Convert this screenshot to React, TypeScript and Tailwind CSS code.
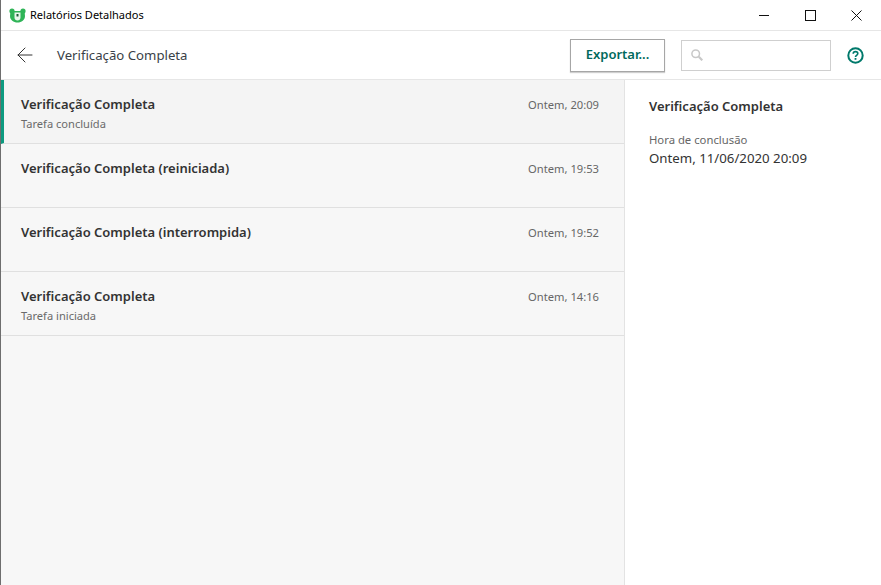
import { ArrowLeft } from "lucide-react";

const reports = [
  { title: "Verificação Completa", sub: "Tarefa concluída", time: "Ontem, 20:09", active: true },
  { title: "Verificação Completa (reiniciada)", sub: "", time: "Ontem, 19:53", active: false },
  { title: "Verificação Completa (interrompida)", sub: "", time: "Ontem, 19:52", active: false },
  { title: "Verificação Completa", sub: "Tarefa iniciada", time: "Ontem, 14:16", active: false },
];

function BearLogo() {
  return (
    <svg width="17" height="15" viewBox="0 0 17 15">
      <circle cx="3" cy="3" r="2.600" fill="#2fb457" />
      <circle cx="14" cy="3" r="2.600" fill="#2fb457" />
      <path d="M1.500 3h14l.5 5c0 4-3.500 6.500-7.500 6.500s-7.500-2.500-7.500-6.500z" fill="#2fb457" />
      <path d="M5.500 4.500h6v5c0 1.800-1.300 3-3 3s-3-1.200-3-3z" fill="#e8f6ec" />
      <rect x="7.500" y="6" width="2" height="2.500" fill="#1d5c36" />
    </svg>
  );
}

function HelpIcon() {
  return (
    <svg width="17" height="17" viewBox="0 0 17 17" fill="none">
      <circle cx="8.500" cy="8.500" r="7.200" stroke="#00796b" strokeWidth="2" />
      <path d="M6.200 6.700c0-1.300 1-2.100 2.300-2.100s2.300 .8 2.300 2c0 1.700-2.300 1.700-2.300 3.300" stroke="#00796b" strokeWidth="1.600" />
      <rect x="7.600" y="11" width="1.800" height="1.800" fill="#00796b" />
    </svg>
  );
}

function SearchIcon() {
  return (
    <svg width="12" height="12" viewBox="0 0 12 12" fill="none">
      <circle cx="4.700" cy="4.700" r="3.800" stroke="#c8c8c8" strokeWidth="1.500" />
      <path d="M7.800 7.800l3.500 3.500" stroke="#c8c8c8" strokeWidth="2.200" />
    </svg>
  );
}

function WindowButtons() {
  return (
    <div className="ml-auto mr-[2px] flex items-center">
      <div className="w-[46px] flex justify-center">
        <svg width="10" height="10" viewBox="0 0 10 10"><path d="M0 5.500h10" stroke="#111" /></svg>
      </div>
      <div className="w-[46px] flex justify-center">
        <svg width="11" height="11" viewBox="0 0 11 11"><rect x=".5" y=".5" width="10" height="10" fill="none" stroke="#111" /></svg>
      </div>
      <div className="w-[46px] flex justify-center">
        <svg width="11" height="11" viewBox="0 0 11 11"><path d="M.5 .5l10 10M10.500 .5l-10 10" stroke="#111" /></svg>
      </div>
    </div>
  );
}

export default function App() {
  return (
    <div className="h-[585px] w-[881px] overflow-hidden flex flex-col bg-white border-l border-l-[#6e6e6e] font-['Noto_Sans','Open_Sans',sans-serif] text-[#2f2f2f]">
      <div className="h-[31px] shrink-0 flex items-center border-b border-[#e6e6e6]">
        <div className="ml-[8px] flex items-center gap-[4px]">
          <BearLogo />
          <span className="text-[11px] text-black">Relatórios Detalhados</span>
        </div>
        <WindowButtons />
      </div>

      <div className="h-[49px] shrink-0 flex items-center border-b border-[#e6e6e6]">
        <ArrowLeft className="ml-[12px] text-[#333]" size={24} strokeWidth={1} />
        <h1 className="ml-[20px] pt-[1px] text-[13.200px] text-[#3a3f47]">Verificação Completa</h1>
        <button className="ml-auto h-[33px] w-[95px] border border-[#a6a6a6] shadow-[0_1px_1px_#cfcfcf] text-[13px] font-semibold text-[#00695c]">Exportar...</button>
        <div className="ml-[16px] h-[31px] w-[150px] border border-[#cfcfcf] flex items-center pl-[9px]">
          <SearchIcon />
        </div>
        <div className="ml-[16px] mr-[17px] flex"><HelpIcon /></div>
      </div>

      <div className="flex-1 flex min-h-0">
        <div className="w-[624px] shrink-0 bg-[#f7f7f7] border-r border-[#e3e3e3]">
          {reports.map((r, i) => (
            <div key={i} className={`h-[64px] flex justify-between border-b border-[#e0e0e0] pr-[25px] ${r.active ? "bg-[#f4f4f4] border-l-[3px] border-l-[#0d9a80] pl-[17px]" : "pl-[20px]"}`}>
              <div className="pt-[14px]">
                <div className="text-[13px] leading-[20px] font-semibold text-[#333]">{r.title}</div>
                <div className="text-[11.100px] leading-[16px] mt-[2px] text-[#6a6a6a]">{r.sub}</div>
              </div>
              <div className="pt-[17px] text-[11.200px] leading-[16px] text-[#666]">{r.time}</div>
            </div>
          ))}
        </div>
        <div className="flex-1 pl-[24px] pt-[16px]">
          <h2 className="text-[13px] leading-[20px] font-semibold text-[#333]">Verificação Completa</h2>
          <div className="mt-[16px] text-[11.300px] leading-[16px] text-[#666]">Hora de conclusão</div>
          <div className="text-[13.250px] leading-[20px] text-[#333]">Ontem, 11/06/2020 20:09</div>
        </div>
      </div>
    </div>
  );
}
